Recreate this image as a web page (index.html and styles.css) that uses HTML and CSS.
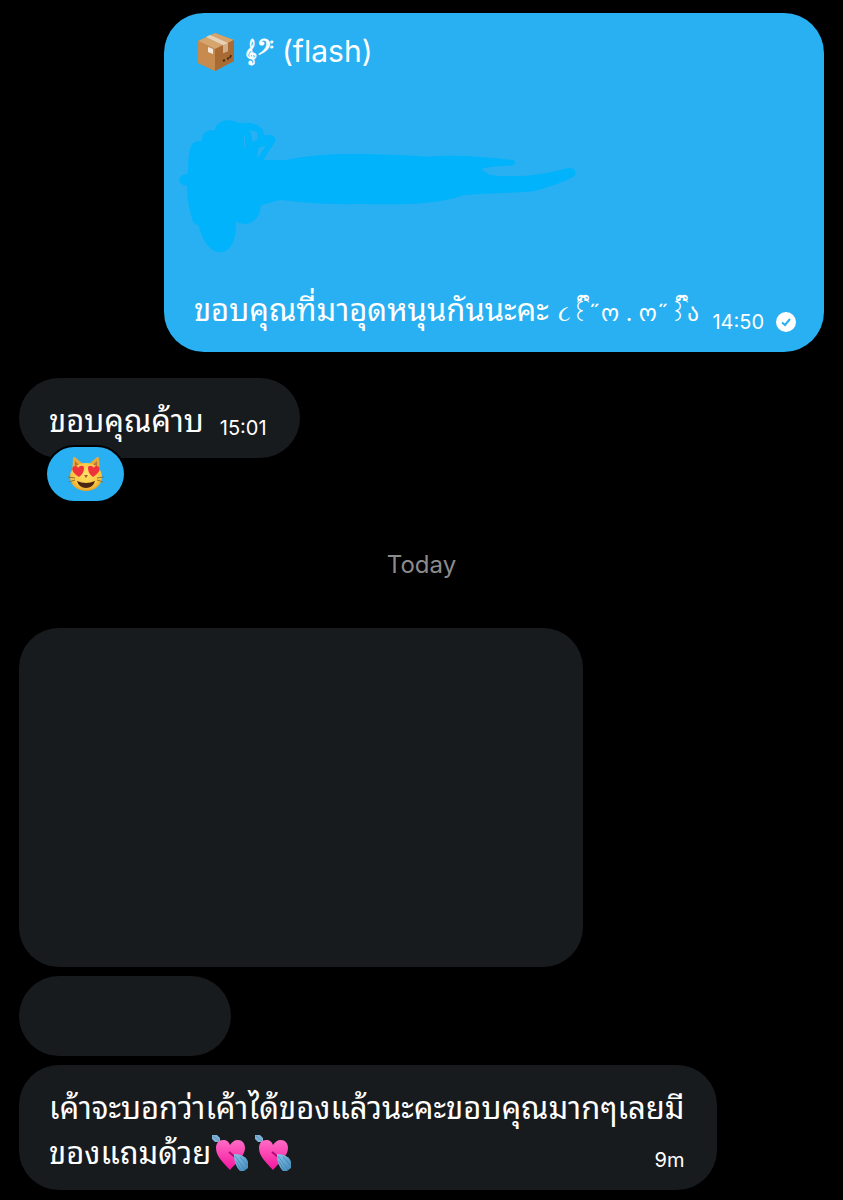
FILE: index.html
```html
<!DOCTYPE html>
<html lang="th">
<head>
    <meta charset="UTF-8">
    <meta name="viewport" content="width=device-width, initial-scale=1.0">
    <title>Chat</title>
    <link rel="stylesheet" href="styles.css">
</head>
<body>
    <!-- Shared emoji artwork -->
    <svg class="sprite" aria-hidden="true">
        <defs>
            <linearGradient id="heartPink" x1="0" y1="0" x2="0" y2="1">
                <stop offset="0" stop-color="#ff6cc4"/>
                <stop offset="1" stop-color="#f5169f"/>
            </linearGradient>
            <linearGradient id="feather" x1="0" y1="0" x2="1" y2="1">
                <stop offset="0" stop-color="#8fc8ea"/>
                <stop offset="1" stop-color="#3d86b8"/>
            </linearGradient>
            <radialGradient id="catFace" cx="0.5" cy="0.4" r="0.65">
                <stop offset="0" stop-color="#ffe36a"/>
                <stop offset="0.7" stop-color="#f8c33f"/>
                <stop offset="1" stop-color="#dc9326"/>
            </radialGradient>
        </defs>
        <symbol id="arrowHeart" viewBox="0 0 38 38">
            <path d="M7 7L13 13" stroke="#5c83a5" stroke-width="2"/>
            <path d="M1 1L6 1L9 4L9 8L4 8L1 5Z" fill="#7fb0d6"/>
            <path d="M2 2L8 7" stroke="#5f90b8" stroke-width="1"/>
            <path d="M19 36C13 29 5 23 5 14C5 9 8 6 12 6C16 6 18 8 19 11C21 8 23 6 27 6C31 6 34 9 34 14C34 22 25 29 19 36Z" fill="url(#heartPink)"/>
            <path d="M18 18L24 23" stroke="#b50b73" stroke-width="2"/>
            <path d="M23 20C30 20 36 23 37 28L37 34L33 37L29 37C25 33 23 27 23 20Z" fill="url(#feather)"/>
            <path d="M24 22L34 36M29 23L36 31M25 27L30 36" fill="none" stroke="#3c7fae" stroke-width="1" opacity="0.7"/>
        </symbol>
    </svg>

    <main class="chat">
        <article class="bubble bubble-sent bubble-order">
            <p class="text parcel-line">
                <svg class="parcel" viewBox="0 0 38 40" role="img" aria-label="Parcel">
                    <path d="M1 9L18 1L37 8L37 29L18 39L1 31Z" fill="#b97e46"/>
                    <path d="M1 9L18 1L37 8L18 17Z" fill="#d6a56e"/>
                    <path d="M18 17L37 8L37 29L18 39Z" fill="#a96a34"/>
                    <path d="M1 9L18 17L18 39L1 31Z" fill="#c88b4f"/>
                    <path d="M9 5L13 3L31 11L31 19L26 21L26 13Z" fill="#e6d2b8"/>
                    <path d="M26 13L31 11L31 19L26 21Z" fill="#d0ae87"/>
                    <path d="M11 15L16 17L16 22L11 20Z" fill="#f2e9dc"/>
                    <path d="M26 29L28 28M30 27L32 26M33 26L34 23" stroke="#4a2d14" stroke-width="2"/>
                </svg>
                <span class="clefs">𝄞<span class="bass">𝄢</span></span>
                <span class="carrier">(flash)</span>
            </p>
            <svg class="scribble" viewBox="0 0 1260 450" aria-hidden="true">
                <path d="M135 55C150 22 190 28 210 40C240 35 282 42 282 76C305 70 322 80 314 96L280 150L350 150C450 128 570 128 770 140C860 132 950 142 1030 150Q1040 158 1030 166C990 168 960 168 934 178L958 194C1040 206 1120 194 1196 174Q1220 174 1216 194C1200 212 1130 232 1090 244C1020 250 940 250 880 256C800 286 680 284 570 282C470 284 400 278 330 270L272 286C272 320 250 342 225 342Q208 342 197 334C200 390 182 426 150 427C115 426 94 380 86 346Q68 344 66 324C56 290 50 260 52 227Q30 226 27 210Q30 194 54 192C54 150 58 105 72 97Q84 92 96 94C94 70 110 60 135 60Z"/>
                <path class="scribble-gap" d="M238 60L262 66L264 86L248 96L244 76ZM284 108L292 100L266 140L260 142L266 114ZM222 78L225 78L225 112L222 112Z"/>
            </svg>
            <div class="text-row">
                <p class="text">ขอบคุณที่มาอุดหนุนกันนะคะ <span class="kaomoji">૮<span class="ear">꒰<span class="bow">&nbsp;ྀི</span></span>˶ო . ო˶<span class="ear">꒱<span class="bow">&nbsp;ྀི</span></span>ა</span></p>
                <div class="meta">
                    <time>14:50</time>
                    <svg class="check" viewBox="0 0 20 20" role="img" aria-label="Sent">
                        <circle cx="10" cy="10" r="10" fill="#fff"/>
                        <path d="M6 10.500L9 13L14 7" fill="none" stroke="#28b0f2" stroke-width="2"/>
                    </svg>
                </div>
            </div>
        </article>

        <article class="bubble bubble-received has-reaction">
            <div class="text-row">
                <p class="text">ขอบคุณค้าบ</p>
                <div class="meta"><time>15:01</time></div>
            </div>
            <button class="reaction" type="button" aria-label="Reaction">
                <svg viewBox="0 0 36 36" aria-hidden="true">
                    <path d="M4 18L5 2Q6 0 8 2L15 8L21 8L28 2Q30 0 31 2L32 18Z" fill="#e9a93a"/>
                    <path d="M7 5L12 10L7 14ZM29 5L24 10L29 14Z" fill="#b96f3a"/>
                    <ellipse cx="18" cy="21" rx="16" ry="14" fill="url(#catFace)"/>
                    <path d="M11 21C6 18 3 14 5 11C7 9 10 10 10 12C12 9 16 9 16 12C16 16 14 19 11 21Z" fill="#f0323c"/>
                    <path d="M25 21C22 19 20 16 20 12C20 9 24 9 26 12C26 10 29 9 31 11C33 14 30 18 25 21Z" fill="#f0323c"/>
                    <path d="M9 25Q18 29 27 25Q25 32 18 32Q11 32 9 25Z" fill="#4a2512"/>
                    <path d="M16 19L20 19L18 22Z" fill="#a4592a"/>
                    <path d="M0 21L7 22M1 26L7 24M36 21L29 22M35 26L29 24" stroke="#92713a" stroke-width="1"/>
                </svg>
            </button>
        </article>

        <div class="day-divider">Today</div>

        <article class="bubble bubble-received bubble-blank-large"></article>
        <article class="bubble bubble-received bubble-blank-small"></article>

        <article class="bubble bubble-received bubble-wide">
            <p class="text">เค้าจะบอกว่าเค้าได้ของแล้วนะคะขอบคุณมากๆเลยมี<br>ของแถมด้วย<svg class="heart" role="img" aria-label="Heart with arrow"><use href="#arrowHeart"/></svg><svg class="heart" role="img" aria-label="Heart with arrow"><use href="#arrowHeart"/></svg></p>
            <div class="meta"><time>9m</time></div>
        </article>
    </main>
</body>
</html>
```

FILE: styles.css
```css
* {
    box-sizing: border-box;
}
body {
    margin: 0;
    background-color: #000;
    color: #fff;
    font-family: Inter, "Noto Sans Thai Looped", Loma, Waree, "Noto Sans", "DejaVu Sans", sans-serif;
}
.sprite {
    position: absolute;
    width: 0;
    height: 0;
}
.chat {
    display: flex;
    flex-direction: column;
    align-items: flex-start;
    padding: 13px 19px 11px;
}
.bubble {
    position: relative;
    border-radius: 40px;
    padding: 20px 33px 15px 30px;
    max-width: 88%;
}
.bubble-sent {
    align-self: flex-end;
    background-color: #28b0f2;
}
.bubble-received {
    background-color: #181b1e;
}
.text {
    margin: 0;
    font-size: 31px;
    line-height: 45px;
}
.text-row {
    display: flex;
    align-items: flex-end;
    gap: 16px;
}
.meta {
    display: flex;
    align-items: center;
    gap: 12px;
    font-size: 20px;
    line-height: 24px;
    padding-bottom: 3px;
}
.check {
    width: 20px;
    height: 20px;
}

/* Order message */
.bubble-order {
    width: 82%;
    padding: 16px 28px 18px 30px;
}
.bubble-order .text-row {
    justify-content: space-between;
    gap: 12px;
}
.bubble-order .text-row .text {
    padding-bottom: 2px;
    white-space: nowrap;
}
.bubble-order .meta {
    padding-bottom: 0;
}
.parcel-line {
    display: flex;
    align-items: center;
    gap: 8px;
}
.parcel {
    width: 40px;
    height: 40px;
    margin-left: 2px;
}
.clefs {
    font-size: 22px;
    font-weight: bold;
}
.bass {
    font-size: 26px;
    line-height: 24px;
}
.carrier {
    font-size: 30px;
}
.kaomoji {
    font-size: 23px;
    line-height: 24px;
}
.ear {
    position: relative;
}
/* Bow drawn above the bracket */
.bow {
    position: absolute;
    left: 0;
    bottom: -3px;
    font-family: "Noto Serif Tibetan", "Noto Sans Tibetan", Jomolhari, "Tibetan Machine Uni", serif;
}
.scribble {
    display: block;
    width: 420px;
    height: 150px;
    margin: 36px 0 27px -24px;
    fill: #00b3fa;
}
.scribble-gap {
    fill: #28b0f2;
}

/* Reaction under a message */
.has-reaction {
    margin-top: 26px;
}
.reaction {
    position: absolute;
    left: 28px;
    bottom: -43px;
    width: 77px;
    height: 54px;
    padding: 0;
    border: 0;
    border-radius: 27px;
    background-color: #28b0f2;
    box-shadow: 0 0 0 2px #000;
    cursor: pointer;
}
.reaction svg {
    display: block;
    width: 36px;
    height: 36px;
    margin: 0 auto;
}

.day-divider {
    align-self: center;
    margin: 92px 0 48px;
    color: #8b8b8d;
    font-size: 24px;
    line-height: 30px;
}

.bubble-blank-large {
    width: 70%;
    height: 339px;
}
.bubble-blank-small {
    width: 212px;
    height: 80px;
    margin: 9px 0;
}

/* Time shares the last line of the message */
.bubble-wide {
    display: grid;
}
.bubble-wide .text,
.bubble-wide .meta {
    grid-area: 1 / 1;
}
.bubble-wide .meta {
    align-self: end;
    justify-self: end;
}
.heart {
    width: 38px;
    height: 38px;
    margin-right: 5px;
    vertical-align: -8px;
}
```
